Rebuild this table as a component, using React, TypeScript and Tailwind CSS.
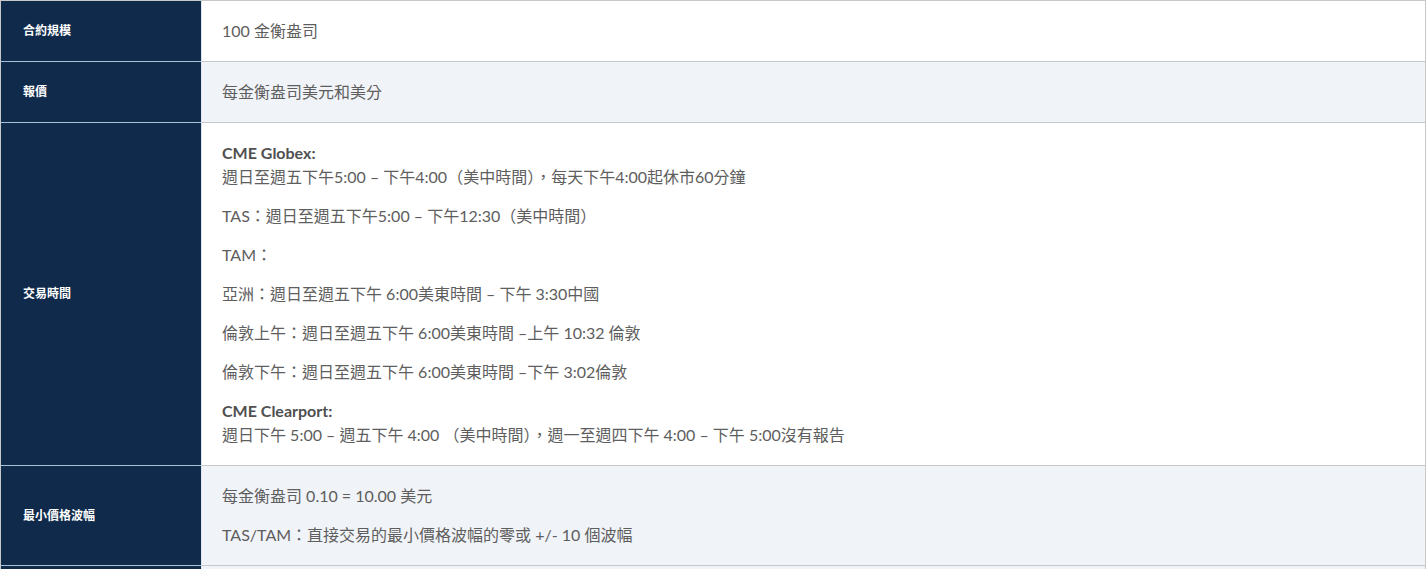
const rows: { label: string; shaded: boolean; lines: { bold?: string; text?: string }[] }[] = [
  { label: "合約規模", shaded: false, lines: [{ text: "100 金衡盎司" }] },
  { label: "報價", shaded: true, lines: [{ text: "每金衡盎司美元和美分" }] },
  {
    label: "交易時間",
    shaded: false,
    lines: [
      { bold: "CME Globex:", text: "週日至週五下午5:00 – 下午4:00（美中時間），每天下午4:00起休市60分鐘" },
      { text: "TAS：週日至週五下午5:00 – 下午12:30（美中時間）" },
      { text: "TAM：" },
      { text: "亞洲：週日至週五下午 6:00美東時間 – 下午 3:30中國" },
      { text: "倫敦上午：週日至週五下午 6:00美東時間 –上午 10:32 倫敦" },
      { text: "倫敦下午：週日至週五下午 6:00美東時間 –下午 3:02倫敦" },
      { bold: "CME Clearport:", text: "週日下午 5:00 – 週五下午 4:00 （美中時間），週一至週四下午 4:00 – 下午 5:00沒有報告" },
    ],
  },
  {
    label: "最小價格波幅",
    shaded: true,
    lines: [{ text: "每金衡盎司 0.10 = 10.00 美元" }, { text: "TAS/TAM：直接交易的最小價格波幅的零或 +/- 10 個波幅" }],
  },
];

export default function App() {
  return (
    <div className="w-[1428px] bg-white font-['Lato','Noto_Sans_CJK_TC',sans-serif]">
      <div className="w-[1426px] border-t border-x border-[#c8c8c8]">
        {rows.map((row) => (
          <div key={row.label} className="flex">
            <div className="w-[201px] shrink-0 flex items-center pl-[22px] bg-[#102a4b] border-r border-[#dfe6ee] border-b border-b-[#a9bfd6]">
              <span className="text-[12px] font-bold text-white">{row.label}</span>
            </div>
            <div
              className={
                "flex-1 pl-[20px] pt-[18px] pb-[18px] border-b border-[#c8c8c8] flex flex-col gap-[15px] text-[16px] leading-[24px] text-[#5e5e5e] " +
                (row.shaded ? "bg-[#f0f3f7]" : "bg-white")
              }
            >
              {row.lines.map((l, i) => (
                <div key={i}>
                  {l.bold && <div className="font-bold text-[#505050]">{l.bold}</div>}
                  {l.text && <div>{l.text}</div>}
                </div>
              ))}
            </div>
          </div>
        ))}
        {/* next row, only its top edge is in view */}
        <div className="flex h-[60px]">
          <div className="w-[201px] shrink-0 bg-[#102a4b] border-r border-[#dfe6ee]" />
          <div className="flex-1 bg-[#f0f3f7]" />
        </div>
      </div>
    </div>
  );
}
